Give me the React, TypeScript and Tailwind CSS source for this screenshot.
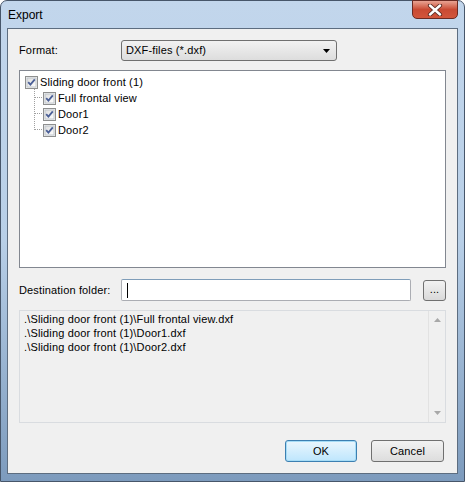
import React from "react";

const Check = () => (
  <svg width="13" height="13" viewBox="0 0 13 13" className="shrink-0">
    <defs>
      <linearGradient id="cbg" x1="0" y1="0" x2="1" y2="1">
        <stop offset="0" stopColor="#dcdcdc" />
        <stop offset="1" stopColor="#ffffff" />
      </linearGradient>
    </defs>
    <rect x="0.5" y="0.5" width="12" height="12" fill="#f4f4f4" stroke="#8e8f8f" />
    <rect x="2" y="2" width="9" height="9" fill="url(#cbg)" stroke="#c0c6cc" strokeWidth="1" />
    <path d="M3.2 6.2 L5.4 8.6 L9.8 3.4" fill="none" stroke="#4a5f97" strokeWidth="1.8" />
  </svg>
);

const TreeRow = ({ label, child }: { label: string; child?: boolean }) => (
  <div className={`flex items-center h-[16px] gap-[2px] ${child ? "pl-[23px]" : "pl-[5px]"}`}>
    <Check />
    <span>{label}</span>
  </div>
);

const paths = [
  ".\\Sliding door front (1)\\Full frontal view.dxf",
  ".\\Sliding door front (1)\\Door1.dxf",
  ".\\Sliding door front (1)\\Door2.dxf",
];

export default function App() {
  return (
    <div
      className="w-[465px] h-[482px] rounded-t-[7px] border border-[#47566a] bg-gradient-to-b from-[#c2d6ec] via-[#b8cfe7] to-[#7d9bbd] flex flex-col text-[11px] tracking-[0.15px] text-black"
      style={{ fontFamily: '"Liberation Sans", Arial, sans-serif' }}
    >
      <div className="h-[27px] flex items-start justify-between pl-[7px] pr-[6px]">
        <span className="text-[12px] mt-[5px] tracking-normal">Export</span>
        <div className="w-[46px] h-[19px] -mt-px rounded-b-[5px] border border-[#6b2a22] bg-gradient-to-b from-[#e8a393] via-[#c94a33] to-[#d2553b] flex items-center justify-center">
          <svg width="16" height="12" viewBox="0 0 16 12">
            <path
              d="M3 1.5 L13 10.5 M13 1.5 L3 10.5"
              stroke="#5a2a22"
              strokeWidth="4.2"
              strokeLinecap="round"
            />
            <path
              d="M3 1.5 L13 10.5 M13 1.5 L3 10.5"
              stroke="#ffffff"
              strokeWidth="2.4"
              strokeLinecap="round"
            />
          </svg>
        </div>
      </div>
      <div className="flex-1 mx-[6px] mb-[7px] border border-[#5d6d80] bg-[#f0f0f0] px-[11px] pt-[11px] flex flex-col">
        <div className="flex items-center h-[21px]">
          <span className="w-[102px]">Format:</span>
          <div className="w-[216px] h-[21px] rounded-[3px] border border-[#707070] bg-gradient-to-b from-[#f2f2f2] to-[#dddddd] flex items-center justify-between pl-[4px] pr-[6px]">
            <span>DXF-files (*.dxf)</span>
            <svg width="7" height="4" viewBox="0 0 7 4">
              <path d="M0 0 H7 L3.5 4 Z" fill="#000" />
            </svg>
          </div>
        </div>
        <div className="relative mt-[9px] h-[198px] border border-[#828790] bg-white pt-[3px]">
          <svg className="absolute left-0 top-0" width="60" height="70">
            <g stroke="#a0a0a0" strokeDasharray="1 1">
              <line x1="14.5" y1="18" x2="14.5" y2="59" />
              <line x1="15" y1="26.5" x2="22" y2="26.5" />
              <line x1="15" y1="42.5" x2="22" y2="42.5" />
              <line x1="15" y1="58.5" x2="22" y2="58.5" />
            </g>
          </svg>
          <div className="relative">
            <TreeRow label="Sliding door front (1)" />
            <TreeRow label="Full frontal view" child />
            <TreeRow label="Door1" child />
            <TreeRow label="Door2" child />
          </div>
        </div>
        <div className="flex items-center mt-[11px] h-[22px]">
          <span className="w-[102px]">Destination folder:</span>
          <div className="w-[290px] h-[22px] rounded-[2px] border border-[#abadb3] border-t-[#7f9db9] bg-white flex items-center pl-[5px]">
            <div className="w-px h-[15px] bg-black" />
          </div>
          <div className="ml-[12px] w-[23px] h-[21px] rounded-[3px] border border-[#707070] bg-gradient-to-b from-[#f2f2f2] to-[#d9d9d9] flex items-center justify-center">
            <span className="leading-none -mt-[2px]">...</span>
          </div>
        </div>
        <div className="mt-[9px] h-[113px] border border-[#d9dce0] bg-[#f0f0f0] flex">
          <div className="flex-1 pl-[4px] pt-[1px] leading-[14px]">
            {paths.map((p) => (
              <div key={p}>{p}</div>
            ))}
          </div>
          <div className="w-[17px] border-l border-[#e2e2e2] flex flex-col items-center justify-between py-[7px]">
            <svg width="7" height="4" viewBox="0 0 7 4">
              <path d="M3.5 0 L7 4 H0 Z" fill="#a8a8a8" />
            </svg>
            <svg width="7" height="4" viewBox="0 0 7 4">
              <path d="M0 0 H7 L3.5 4 Z" fill="#a8a8a8" />
            </svg>
          </div>
        </div>
        <div className="flex justify-end gap-[14px] mt-[17px] pr-[2px]">
          <div className="w-[72px] h-[22px] rounded-[3px] border border-[#3c7fb1] bg-gradient-to-b from-[#eaf6fd] to-[#bee6fd] shadow-[inset_0_0_0_1px_#a6dcf6] flex items-center justify-center">
            OK
          </div>
          <div className="w-[73px] h-[22px] rounded-[3px] border border-[#707070] bg-gradient-to-b from-[#f2f2f2] to-[#dddddd] flex items-center justify-center">
            Cancel
          </div>
        </div>
      </div>
    </div>
  );
}
